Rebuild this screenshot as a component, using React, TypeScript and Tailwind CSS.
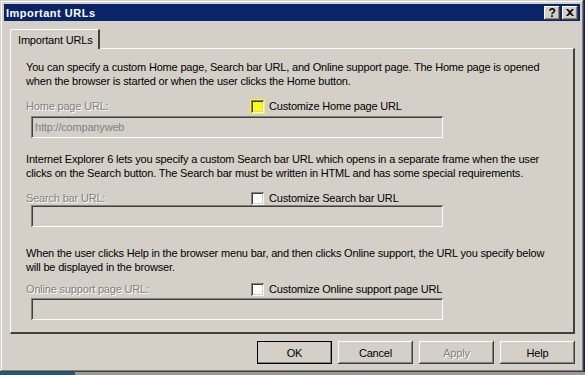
const raised =
  "shadow-[inset_-1px_-1px_#404040,inset_1px_1px_#ffffff,inset_-2px_-2px_#808080,inset_2px_2px_#d4d0c8]";
const sunken =
  "shadow-[inset_1px_1px_#808080,inset_-1px_-1px_#ffffff,inset_2px_2px_#404040,inset_-2px_-2px_#d4d0c8]";

function Checkbox({ highlight }: { highlight?: boolean }) {
  return (
    <div
      className={`w-[13px] h-[13px] shrink-0 ${sunken} ${
        highlight ? "bg-[#ffff00] outline outline-1 outline-[#ffff00]" : "bg-white"
      }`}
    />
  );
}

function UrlField({
  label,
  check,
  value,
  highlight,
  labelGap,
  inputGap,
}: {
  label: string;
  check: string;
  value?: string;
  highlight?: boolean;
  labelGap: string;
  inputGap: string;
}) {
  return (
    <>
      <div className={`flex items-center h-[14px] ${labelGap}`}>
        <span className="w-[225px] text-[#808080] [text-shadow:1px_1px_0_#ffffff]">{label}</span>
        <Checkbox highlight={highlight} />
        <span className="ml-[5px]">{check}</span>
      </div>
      <div
        className={`ml-[5px] w-[412px] h-[22px] ${sunken} bg-[#d4d0c8] flex items-center pl-[4px] text-[#808080] ${inputGap}`}
      >
        {value}
      </div>
    </>
  );
}

function Button({ label, isDefault, disabled }: { label: string; isDefault?: boolean; disabled?: boolean }) {
  return (
    <div
      className={`w-[75px] h-[23px] flex items-center justify-center bg-[#d4d0c8] ${
        isDefault ? "outline outline-1 outline-black -outline-offset-1 " : ""
      }${raised} ${disabled ? "text-[#808080] [text-shadow:1px_1px_0_#ffffff]" : "text-black"}`}
    >
      {label}
    </div>
  );
}

export default function App() {
  return (
    <div
      className="w-[585px] h-[375px] bg-[#0a246a] flex flex-col text-[11px] leading-[14px] tracking-[-0.18px] text-black"
      style={{ fontFamily: '"Liberation Sans", Arial, sans-serif' }}
    >
      {/* window */}
      <div
        className={`w-[584px] h-[372px] shrink-0 bg-[#d4d0c8] p-[4px] flex flex-col shadow-[inset_-1px_-1px_#404040,inset_1px_1px_#d4d0c8,inset_-2px_-2px_#808080,inset_2px_2px_#ffffff]`}
      >
        {/* title bar */}
        <div className="h-[17px] bg-[#0a246a] flex items-center justify-between pl-[2px] pr-[2px]">
          <span className="text-white font-bold text-[11px] tracking-[0.5px]">Important URLs</span>
          <div className="flex gap-[2px]">
            <div className={`w-[16px] h-[14px] bg-[#d4d0c8] ${raised} flex items-center justify-center font-bold text-[12px] leading-none`}>
              ?
            </div>
            <div className={`w-[16px] h-[14px] bg-[#d4d0c8] ${raised} flex items-center justify-center`}>
              <svg width="8" height="7" viewBox="0 0 8 7">
                <path d="M0 0 L2 0 L4 2 L6 0 L8 0 L5 3.5 L8 7 L6 7 L4 5 L2 7 L0 7 L3 3.5 Z" fill="#000" />
              </svg>
            </div>
          </div>
        </div>

        {/* tab */}
        <div className="mt-[8px] ml-[6px] flex">
          <div className="h-[20px] w-[90px] pl-[7px] flex items-center whitespace-nowrap border-l border-t border-white border-r-2 border-r-[#404040] rounded-tl-[2px] bg-[#d4d0c8] -mb-[1px] relative">
            Important URLs
          </div>
        </div>

        {/* panel */}
        <div className="ml-[6px] w-[565px] h-[286px] border-l border-t border-white border-r-2 border-b-2 border-r-[#404040] border-b-[#404040] pl-[15px] pt-[11px] flex flex-col">
          <p>
            You can specify a custom Home page, Search bar URL, and Online support page. The Home page is opened
            <br />
            when the browser is started or when the user clicks the Home button.
          </p>
          <UrlField
            label="Home page URL:"
            check="Customize Home page URL"
            value="http://companyweb"
            highlight
            labelGap="mt-[11px]"
            inputGap="mt-[3px]"
          />
          <p className="mt-[14px]">
            Internet Explorer 6 lets you specify a custom Search bar URL which opens in a separate frame when the user
            <br />
            clicks on the Search button. The Search bar must be written in HTML and has some special requirements.
          </p>
          <UrlField
            label="Search bar URL:"
            check="Customize Search bar URL"
            labelGap="mt-[11px]"
            inputGap="mt-[0px]"
          />
          <p className="mt-[19px]">
            When the user clicks Help in the browser menu bar, and then clicks Online support, the URL you specify below
            <br />
            will be displayed in the browser.
          </p>
          <UrlField
            label="Online support page URL:"
            check="Customize Online support page URL"
            labelGap="mt-[8px]"
            inputGap="mt-[2px]"
          />
        </div>

        {/* buttons */}
        <div className="mt-[7px] mr-[5px] flex justify-end gap-[6px]">
          <Button label="OK" isDefault />
          <Button label="Cancel" />
          <Button label="Apply" disabled />
          <Button label="Help" />
        </div>
      </div>

      {/* desktop strip below */}
      <div className="flex-1 flex">
        <div className="w-[75px] bg-[#1d5a78]" />
        <div className="flex-1 bg-[#9a9a9a]" />
      </div>
    </div>
  );
}
